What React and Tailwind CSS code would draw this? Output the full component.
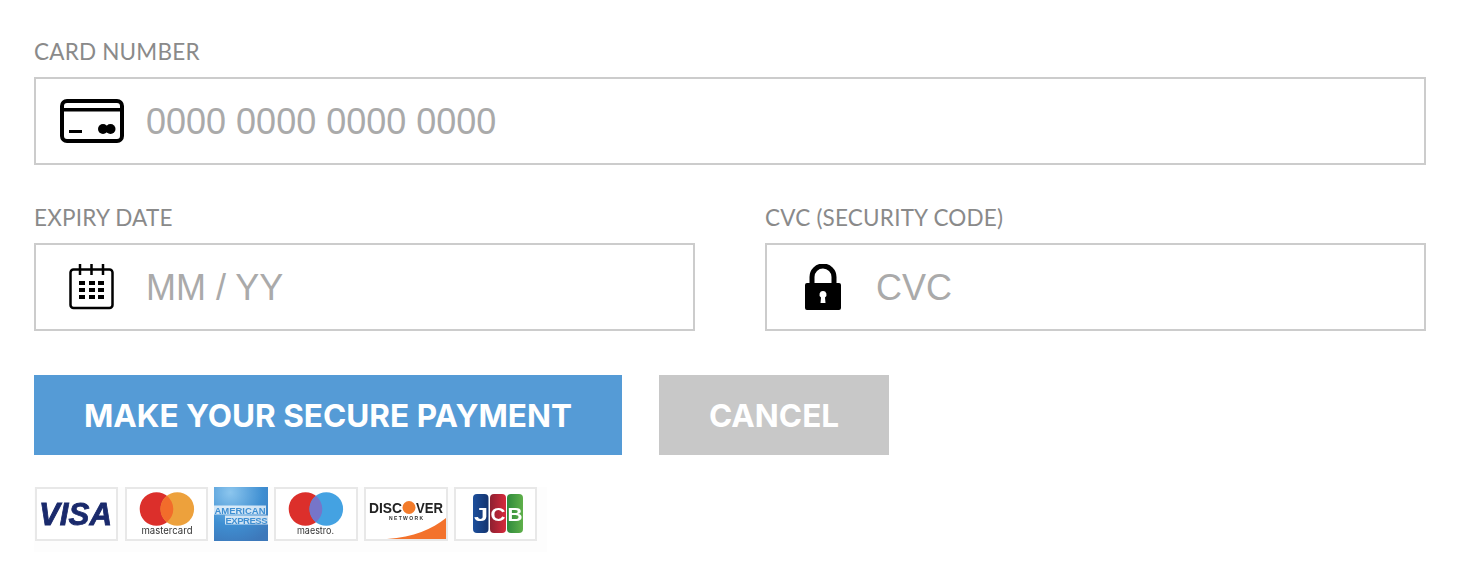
const CardIcon = () => (
  <svg width="64" height="44" viewBox="0 0 64 44" fill="none">
    <rect x="2" y="2" width="60" height="40" rx="5" stroke="#000" strokeWidth="4" />
    <rect x="2" y="9" width="60" height="3.5" fill="#000" />
    <rect x="9" y="31" width="13" height="3" fill="#000" />
    <circle cx="43" cy="30" r="5" fill="#000" />
    <circle cx="50.5" cy="30" r="5" fill="#000" />
  </svg>
);

const CalendarIcon = () => (
  <svg width="46" height="46" viewBox="0 0 46 46" fill="none">
    <rect x="1.5" y="5.5" width="42" height="38.5" rx="3" stroke="#000" strokeWidth="2.5" />
    <path d="M11 0v11M22.5 0v11M34 0v11" stroke="#000" strokeWidth="2.5" />
    <path d="M10 17h6v4h-6zM20 17h6v4h-6zM29 17h6v4h-6zM10 24h6v4h-6zM20 24h6v4h-6zM29 24h6v4h-6zM10 31h6v4h-6zM20 31h6v4h-6zM29 31h6v4h-6z" fill="#000" />
  </svg>
);

const LockIcon = () => (
  <svg width="36" height="46" viewBox="0 0 36 46" fill="none">
    <path d="M7 20v-7a11 11 0 0 1 22 0v7" stroke="#000" strokeWidth="5" />
    <path fillRule="evenodd" clipRule="evenodd" d="M2 19h32a2 2 0 0 1 2 2v23a2 2 0 0 1-2 2H2a2 2 0 0 1-2-2V21a2 2 0 0 1 2-2zM18 27a3.5 3.5 0 0 0-2 6.4L15.5 39h5L20 33.4A3.5 3.5 0 0 0 18 27z" fill="#000" />
  </svg>
);

const Field = ({ label, icon, placeholder, iconBox }) => (
  <div className="flex flex-col">
    <label className="font-['Lato',sans-serif] text-[22.5px] leading-[26px] pt-px font-normal tracking-[0.2px] text-[#8a8a8a] mb-3">{label}</label>
    <div className="flex items-center h-[88px] border-2 border-[#ccc] bg-white">
      <div className={`flex shrink-0 ${iconBox}`}>{icon}</div>
      <input
        readOnly
        placeholder={placeholder}
        className="flex-1 min-w-0 bg-transparent outline-none pt-[2px] font-['Liberation_Sans',Arial,sans-serif] text-[36px] placeholder:text-[#aaa]"
      />
    </div>
  </div>
);

const Badge = ({ children, size }) => (
  <div className={`h-[54px] overflow-hidden ${size}`}>{children}</div>
);

const logoClass = "w-full h-full blur-[0.3px]";

const Visa = () => (
  <svg viewBox="2 2 79 50" className={logoClass}>
    <text x="4" y="38" fontFamily="Liberation Sans" fontWeight="700" fontStyle="italic" fontSize="31" textLength="73" lengthAdjust="spacingAndGlyphs" stroke="#1a2a6c" strokeWidth="0.8" fill="#1a2a6c">VISA</text>
  </svg>
);

const Mastercard = () => (
  <svg viewBox="2 2 79 50" className={logoClass}>
    <circle cx="31.5" cy="22" r="16.8" fill="#dc2f2b" />
    <circle cx="52.3" cy="22" r="16.8" fill="#eda13c" />
    <path d="M41.9 8.8a16.8 16.8 0 0 1 0 26.4a16.8 16.8 0 0 1 0-26.4z" fill="#f26c2b" />
    <text x="16.5" y="47" fontFamily="Inter" fontSize="10" textLength="51" lengthAdjust="spacingAndGlyphs" fill="#333">mastercard</text>
  </svg>
);

const Amex = () => (
  <svg viewBox="0 0 54 54" className={logoClass}>
    <defs>
      <radialGradient id="amexGrad" cx="0.3" cy="0.1" r="1">
        <stop offset="0" stopColor="#8cc6ee" />
        <stop offset="0.6" stopColor="#3f8fd2" />
        <stop offset="1" stopColor="#3d78ba" />
      </radialGradient>
    </defs>
    <rect width="54" height="54" fill="url(#amexGrad)" />
    <rect x="0" y="18.5" width="52" height="9" fill="#fff" fillOpacity="0.75" />
    <rect x="11" y="28.5" width="43" height="9" fill="#fff" fillOpacity="0.75" />
    <text x="0.5" y="26.5" fontFamily="Liberation Sans" fontWeight="700" fontSize="9.5" fill="#3f8fd2" textLength="51">AMERICAN</text>
    <text x="11.5" y="36.5" fontFamily="Liberation Sans" fontWeight="700" fontSize="9.5" fill="#3f8fd2" textLength="42">EXPRESS</text>
  </svg>
);

const Maestro = () => (
  <svg viewBox="2 2 80 50" className={logoClass}>
    <circle cx="31.5" cy="22" r="16.8" fill="#dc2f2b" />
    <circle cx="52.3" cy="22" r="16.8" fill="#44a2e2" />
    <path d="M41.9 8.8a16.8 16.8 0 0 1 0 26.4a16.8 16.8 0 0 1 0-26.4z" fill="#7675c9" />
    <text x="23" y="47" fontFamily="Inter" fontSize="10" textLength="37" lengthAdjust="spacingAndGlyphs" fill="#333">maestro.</text>
  </svg>
);

const Discover = () => (
  <svg viewBox="2 2 80 50" className={logoClass}>
    <text x="5" y="26" fontFamily="Liberation Sans" fontWeight="700" fontSize="15" textLength="33" lengthAdjust="spacingAndGlyphs" fill="#222">DISC</text>
    <circle cx="45" cy="20.5" r="6.5" fill="#f37b2a" />
    <text x="52" y="26" fontFamily="Liberation Sans" fontWeight="700" fontSize="15" textLength="27" lengthAdjust="spacingAndGlyphs" fill="#222">VER</text>
    <text x="25" y="33" fontFamily="Liberation Sans" fontWeight="700" fontSize="5" textLength="34" fill="#333">NETWORK</text>
    <path d="M23 52C50 50 68 42 82 31V52z" fill="#f3722c" />
  </svg>
);

const Jcb = () => (
  <svg viewBox="2 2 79 50" className={logoClass}>
    <defs>
      <linearGradient id="jcbBlue" x1="0" x2="1"><stop offset="0" stopColor="#1d4f9c" /><stop offset="1" stopColor="#14346f" /></linearGradient>
      <linearGradient id="jcbRed" x1="0" x2="1"><stop offset="0" stopColor="#8e2030" /><stop offset="1" stopColor="#d62a3c" /></linearGradient>
      <linearGradient id="jcbGreen" x1="0" x2="1"><stop offset="0" stopColor="#2f8a3c" /><stop offset="1" stopColor="#5fb04a" /></linearGradient>
    </defs>
    <rect x="19" y="7" width="15.5" height="39" rx="4" fill="url(#jcbBlue)" />
    <rect x="36" y="7" width="16" height="39" rx="4" fill="url(#jcbRed)" />
    <rect x="53" y="7" width="16" height="39" rx="4" fill="url(#jcbGreen)" />
    <text x="20" y="34" fontFamily="Liberation Sans" fontWeight="700" fontSize="19" textLength="14" lengthAdjust="spacingAndGlyphs" fill="#fff">J</text>
    <text x="36.5" y="34" fontFamily="Liberation Sans" fontWeight="700" fontSize="19" textLength="15" lengthAdjust="spacingAndGlyphs" fill="#fff">C</text>
    <text x="53.5" y="34" fontFamily="Liberation Sans" fontWeight="700" fontSize="19" textLength="15" lengthAdjust="spacingAndGlyphs" fill="#fff">B</text>
  </svg>
);

export default function App() {
  return (
    <div className="w-[1462px] h-[576px] bg-white pl-[34px] pr-9 pt-[38px] overflow-hidden">
      <Field
        label="CARD NUMBER"
        placeholder="0000 0000 0000 0000"
        icon={<CardIcon />}
        iconBox="w-[110px] pl-[24px]"
      />
      <div className="grid grid-cols-2 gap-x-[70px] mt-[39px]">
        <Field label="EXPIRY DATE" placeholder="MM / YY" icon={<CalendarIcon />} iconBox="w-[110px] pl-[33px]" />
        <Field label="CVC (SECURITY CODE)" placeholder="CVC" icon={<LockIcon />} iconBox="w-[109px] pl-[38px]" />
      </div>
      <div className="flex gap-[37px] mt-[44px] font-['Inter',sans-serif] font-bold text-[31.5px] text-white">
        <button className="w-[588px] h-20 pt-[2px] bg-[#559bd6]">MAKE YOUR SECURE PAYMENT</button>
        <button className="w-[230px] h-20 pt-[2px] bg-[#c8c8c8]">CANCEL</button>
      </div>
      <div className="flex gap-[6px] mt-8 pl-px w-[513px] h-[65px] bg-[#fdfdfd]">
        <Badge size="w-[83px] mr-px border-2 border-[#e8e8e8] bg-white"><Visa /></Badge>
        <Badge size="w-[83px] border-2 border-[#e8e8e8] bg-white"><Mastercard /></Badge>
        <Badge size="w-[54px]"><Amex /></Badge>
        <Badge size="w-[84px] border-2 border-[#e8e8e8] bg-white"><Maestro /></Badge>
        <Badge size="w-[84px] border-2 border-[#e8e8e8] bg-white"><Discover /></Badge>
        <Badge size="w-[83px] border-2 border-[#e8e8e8] bg-white"><Jcb /></Badge>
      </div>
    </div>
  );
}
